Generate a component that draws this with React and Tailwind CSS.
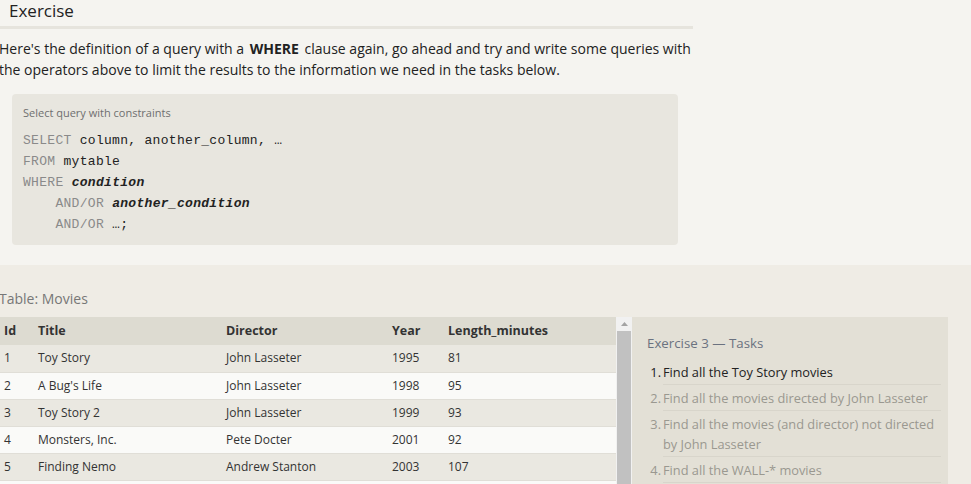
import React from 'react';

const movies = [
    { id: 1, title: 'Toy Story', director: 'John Lasseter', year: 1995, length: 81 },
    { id: 2, title: "A Bug's Life", director: 'John Lasseter', year: 1998, length: 95 },
    { id: 3, title: 'Toy Story 2', director: 'John Lasseter', year: 1999, length: 93 },
    { id: 4, title: 'Monsters, Inc.', director: 'Pete Docter', year: 2001, length: 92 },
    { id: 5, title: 'Finding Nemo', director: 'Andrew Stanton', year: 2003, length: 107 },
    { id: 6, title: 'The Incredibles', director: 'Brad Bird', year: 2004, length: 116 },
];

const tasks = [
    'Find all the Toy Story movies',
    'Find all the movies directed by John Lasseter',
    'Find all the movies (and director) not directed by John Lasseter',
    'Find all the WALL-* movies',
];

const sans = { fontFamily: '"Open Sans", "Noto Sans", sans-serif' };

const CodeBox = () => {
    return (
        <div className="ml-3 mt-[14px] w-[666px] rounded-[4px] bg-[#e8e6df] px-[11px] pb-[10px] pt-[12px]">
            <div className="text-[11px] leading-[14px] text-[#6f6f6f]">Select query with constraints</div>
            <pre className="mt-[10px] font-['Liberation_Mono',monospace] text-[13px] leading-[21px] tracking-[0.3px] text-[#222]">
                <span className="text-[#8a8a8a]">SELECT</span> column, another_column, …{'\n'}
                <span className="text-[#8a8a8a]">FROM</span> mytable{'\n'}
                <span className="text-[#8a8a8a]">WHERE</span> <i className="font-bold">condition</i>{'\n'}
                {'    '}<span className="text-[#8a8a8a]">AND/OR</span> <i className="font-bold">another_condition</i>{'\n'}
                {'    '}<span className="text-[#8a8a8a]">AND/OR</span> …;
            </pre>
        </div>
    );
};

const MoviesTable = () => {
    return (
        <div className="flex h-[200px] w-[632px] overflow-hidden">
            <table className="w-[616px] table-fixed border-collapse self-start text-left text-[12px] leading-[16px] text-[#333]">
                <thead>
                    <tr className="h-[28px] bg-[#dddbd1] text-[12.5px] text-[#333]">
                        <th className="w-[38px] pl-[4px] font-bold">Id</th>
                        <th className="w-[188px] font-bold">Title</th>
                        <th className="w-[166px] font-bold">Director</th>
                        <th className="w-[56px] font-bold">Year</th>
                        <th className="font-bold">Length_minutes</th>
                    </tr>
                </thead>
                <tbody>
                    {movies.map((movie, i) => (
                        <tr key={movie.id} className={`h-[27px] border-b border-[#e0ded7] ${i % 2 === 0 ? 'bg-[#eae8e1]' : 'bg-[#fafaf8]'}`}>
                            <td className="p-0 pl-[4px]">{movie.id}</td>
                            <td className="p-0">{movie.title}</td>
                            <td className="p-0">{movie.director}</td>
                            <td className="p-0">{movie.year}</td>
                            <td className="p-0">{movie.length}</td>
                        </tr>
                    ))}
                </tbody>
            </table>
            <div className="flex w-[16px] flex-col bg-[#f1f1f1]">
                <div className="flex h-[14px] items-center justify-center">
                    <svg width="7" height="4" viewBox="0 0 7 4"><path d="M3.5 0L7 4H0z" fill="#a3a3a3" /></svg>
                </div>
                <div className="mx-[1px] flex-1 bg-[#c1c1c1]"></div>
            </div>
        </div>
    );
};

const TasksPanel = () => {
    return (
        <div className="h-[200px] w-[316px] bg-[#e3e0d6] pl-[15px] pr-[7px] pt-[16px]">
            <div className="text-[13.3px] leading-[20px] text-[#6b7280]">Exercise 3 — Tasks</div>
            <ol className="mt-[6px] text-[12.8px] leading-[20px]">
                {tasks.map((task, i) => (
                    <li key={task} className={`flex ${i === 0 ? 'text-[#222]' : 'text-[#9a9890]'}`}>
                        <span className="w-[14px] shrink-0 pt-[3px] text-right">{i + 1}.</span>
                        <span className="ml-[2px] flex-1 border-b border-[#d8d5cb] pb-[2px] pt-[3px]">{task}</span>
                    </li>
                ))}
            </ol>
        </div>
    );
};

const App = () => {
    return (
        <div className="h-[484px] w-[971px] overflow-hidden bg-[#efece5]" style={sans}>
            <div className="h-[265px] bg-[#f5f4f0]">
                <div className="w-[693px]">
                    <h2 className="border-b-[3px] border-[#e6e4dd] pb-[4px] pl-[9px] text-[17px] leading-[22px] text-[#222]">Exercise</h2>
                    <p className="-ml-[1px] mt-[9px] text-[14px] leading-[21px] text-[#222]">
                        Here's the definition of a query with a <b className="mx-[2px]">WHERE</b> clause again, go ahead and try and write some queries with the operators above to limit the results to the information we need in the tasks below.
                    </p>
                </div>
                <CodeBox />
            </div>
            <div className="pt-[24px]">
                <div className="-ml-[1px] text-[14px] leading-[20px] text-[#777]">Table: Movies</div>
                <div className="mt-[8px] flex items-start">
                    <MoviesTable />
                    <TasksPanel />
                </div>
            </div>
        </div>
    );
};

export default App;
